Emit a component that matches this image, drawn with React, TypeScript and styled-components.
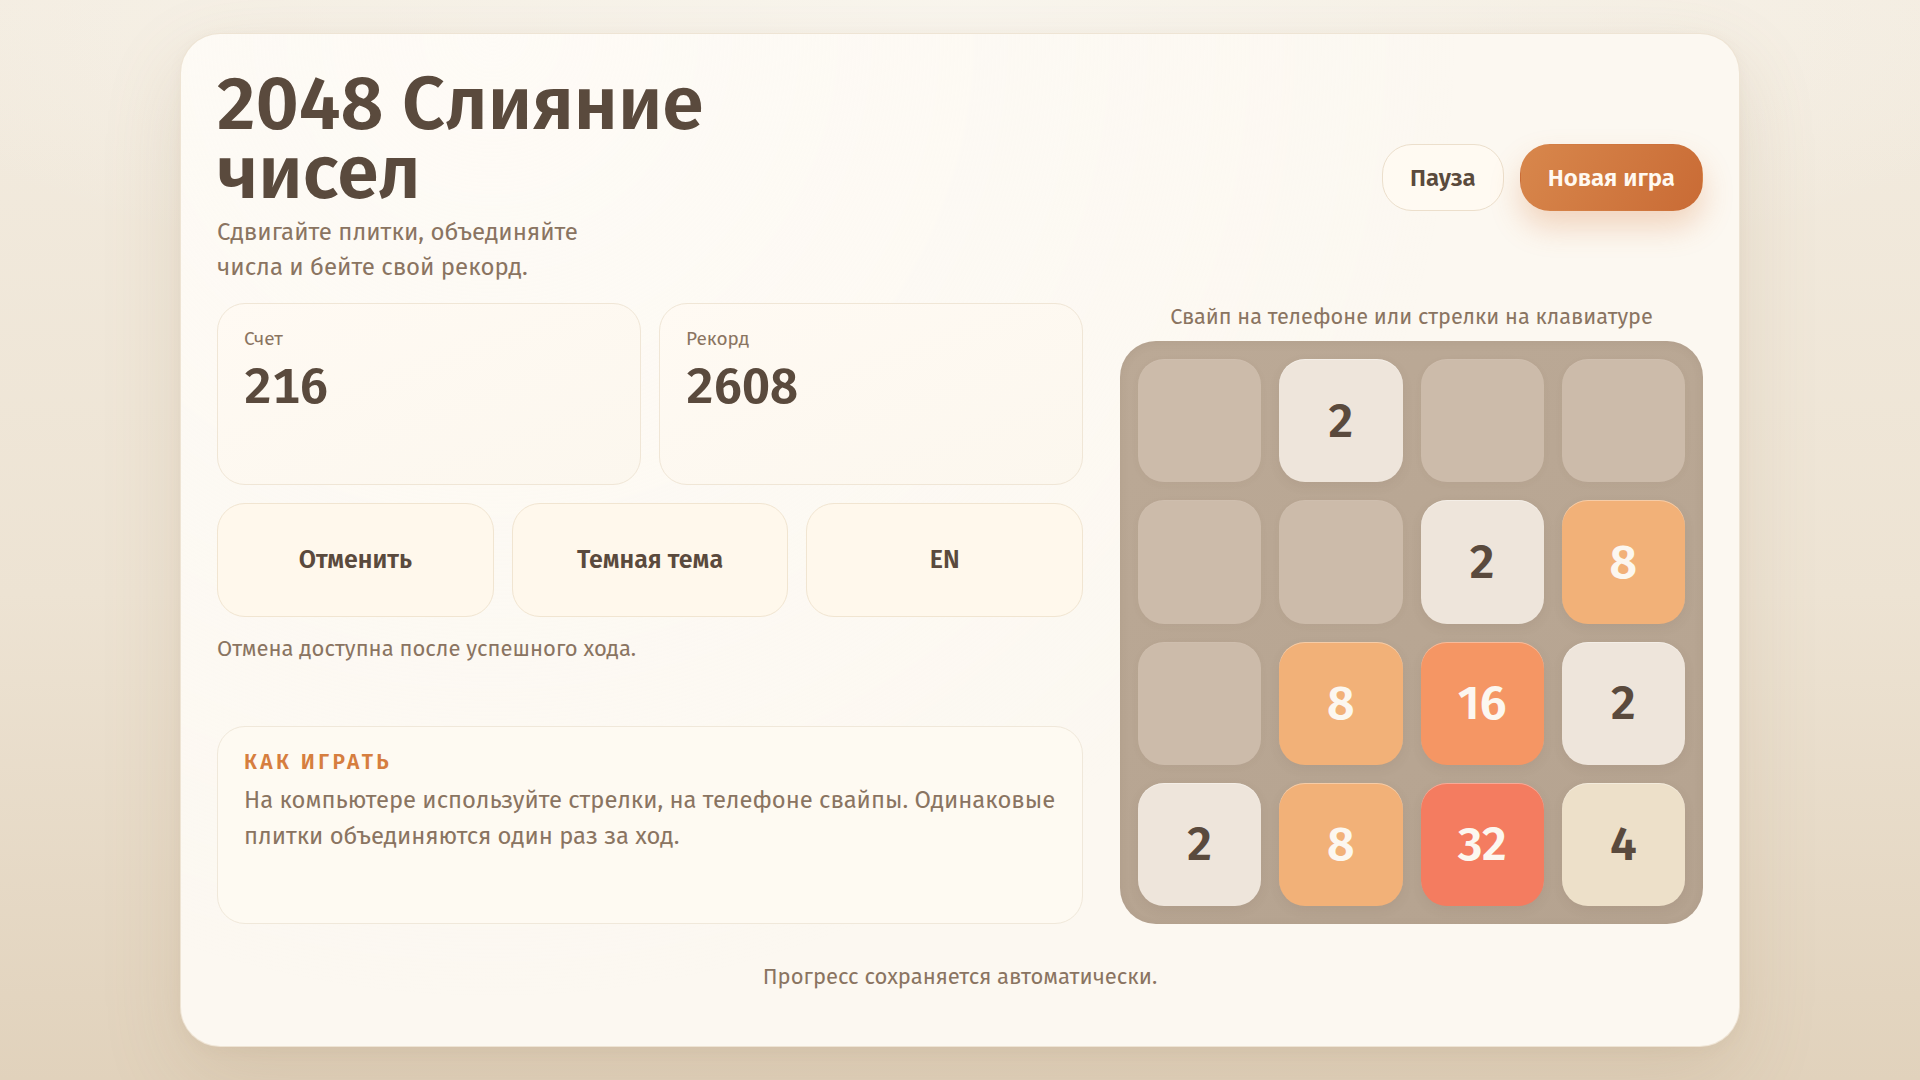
import React from "react";
import styled, { createGlobalStyle } from "styled-components";

const GlobalStyle = createGlobalStyle`
  *, *::before, *::after { box-sizing: border-box; }
  html, body { margin: 0; padding: 0; }
  body {
    min-height: 100vh;
    font-family: "Fira Sans", "DejaVu Sans", sans-serif;
    color: #5a4a3d;
    background:
      radial-gradient(ellipse 60% 30% at 50% 0%, rgba(250, 247, 240, 0.9), rgba(250, 247, 240, 0) 100%),
      linear-gradient(180deg, #f3ece0 0%, #ede3d3 55%, #e1d2bc 100%);
  }
`;

const Page = styled.div`
  min-height: 100vh;
  padding: 33px 180px;
`;

const Card = styled.main`
  min-height: calc(100vh - 66px);
  display: flex;
  flex-direction: column;
  padding: 36px 36px 18px;
  border-radius: 40px;
  border: 1px solid rgba(236, 225, 208, 0.9);
  background:
    radial-gradient(circle at 20% 0%, #fefbf6 0%, rgba(254, 251, 246, 0) 60%),
    #fcf8f1;
  box-shadow: 0 30px 80px rgba(150, 120, 80, 0.16), 0 4px 14px rgba(150, 120, 80, 0.06);
`;

const Header = styled.header`
  display: flex;
  align-items: center;
  justify-content: space-between;
`;

const TitleBlock = styled.div`
  display: flex;
  flex-direction: column;
  gap: 7px;
`;

const Title = styled.h1`
  margin: 0;
  max-width: 600px;
  font-size: 75px;
  line-height: 69px;
  font-weight: 600;
  color: #5a4a3d;
`;

const Subtitle = styled.p`
  margin: 0;
  max-width: 400px;
  font-size: 24px;
  line-height: 35px;
  color: #8a7461;
`;

const HeaderActions = styled.div`
  display: flex;
  gap: 16px;
`;

const PillButton = styled.button<{ $primary?: boolean }>`
  height: 67px;
  padding: 0 27px;
  border-radius: 30px;
  font-family: inherit;
  font-size: 24px;
  font-weight: 600;
  cursor: pointer;
  border: 1px solid ${(p) => (p.$primary ? "transparent" : "#ecdfcc")};
  color: ${(p) => (p.$primary ? "#fff9f1" : "#5a4a3d")};
  background: ${(p) =>
    p.$primary ? "linear-gradient(120deg, #d8874c 0%, #c96b35 100%)" : "#fffaf2"};
  box-shadow: ${(p) =>
    p.$primary ? "0 16px 30px rgba(214, 122, 62, 0.28)" : "none"};
`;

const Main = styled.section`
  margin-top: 18px;
  display: grid;
  grid-template-columns: minmax(0, 1fr) 583px;
  gap: 37px;
`;

const LeftColumn = styled.div`
  display: flex;
  flex-direction: column;
`;

const StatsRow = styled.div`
  display: grid;
  grid-template-columns: 1fr 1fr;
  gap: 18px;
`;

const StatCard = styled.div`
  height: 182px;
  padding: 23px 26px;
  border-radius: 28px;
  border: 1px solid #f0e6d6;
  background: linear-gradient(160deg, #fffaf3 0%, #fcf7ee 100%);
  display: flex;
  flex-direction: column;
`;

const StatLabel = styled.span`
  font-size: 19px;
  line-height: 24px;
  color: #8a7461;
`;

const StatValue = styled.span`
  margin-top: 7px;
  font-size: 50px;
  line-height: 56px;
  font-weight: 600;
  font-variant-numeric: tabular-nums;
  color: #5a4a3d;
`;

const ActionRow = styled.div`
  margin-top: 18px;
  display: grid;
  grid-template-columns: repeat(3, 1fr);
  gap: 18px;
`;

const ActionButton = styled.button`
  height: 114px;
  border-radius: 28px;
  border: 1px solid #f1e5d1;
  background: #fff8ec;
  font-family: inherit;
  font-size: 25px;
  font-weight: 600;
  color: #5a4a3d;
  cursor: pointer;
`;

const Note = styled.p`
  margin: 17px 0 0;
  font-size: 22px;
  line-height: 30px;
  color: #8a7461;
`;

const HowTo = styled.div`
  margin-top: auto;
  height: 198px;
  padding: 22px 12px 22px 26px;
  border-radius: 28px;
  border: 1px solid #f0e8da;
  background: #fefaf2;
`;

const HowToTitle = styled.h2`
  margin: 0;
  font-size: 21px;
  line-height: 26px;
  font-weight: 600;
  letter-spacing: 3.4px;
  color: #d67e3f;
`;

const HowToText = styled.p`
  margin: 7px 0 0;
  font-size: 23.8px;
  line-height: 36px;
  color: #8a7461;
`;

const RightColumn = styled.div`
  display: flex;
  flex-direction: column;
  align-items: center;
  gap: 10px;
`;

const Hint = styled.p`
  margin: 0;
  font-size: 21.7px;
  line-height: 28px;
  color: #8a7461;
`;

const Board = styled.div`
  width: 583px;
  height: 583px;
  padding: 18px;
  border-radius: 36px;
  background: linear-gradient(160deg, #bba996 0%, #b5a390 100%);
  box-shadow: inset 0 2px 10px rgba(90, 70, 50, 0.08);
  display: grid;
  grid-template-columns: repeat(4, 1fr);
  grid-template-rows: repeat(4, 1fr);
  gap: 18px;
`;

const tileColors: Record<number, { bg: string; fg: string }> = {
  0: { bg: "#ccbbaa", fg: "#5a4a3d" },
  2: { bg: "#eee5db", fg: "#5a4a3d" },
  4: { bg: "#ede0c9", fg: "#5a4a3d" },
  8: { bg: "#f2b178", fg: "#fcf7f0" },
  16: { bg: "#f59664", fg: "#fcf7f0" },
  32: { bg: "#f47c60", fg: "#fcf7f0" },
};

const Tile = styled.div<{ $v: number }>`
  border-radius: 26px;
  display: flex;
  align-items: center;
  justify-content: center;
  font-size: 48px;
  font-weight: 600;
  background: ${(p) => tileColors[p.$v].bg};
  color: ${(p) => tileColors[p.$v].fg};
  box-shadow: ${(p) =>
    p.$v === 0
      ? "inset 0 1px 0 rgba(255,255,255,0.05), 0 2px 8px rgba(90,70,50,0.04)"
      : "inset 0 1px 0 rgba(255,255,255,0.35), 0 4px 12px rgba(90,70,50,0.08)"};
`;

const Footer = styled.p`
  margin: 0;
  padding: 38px 0 0;
  text-align: center;
  font-size: 22px;
  line-height: 30px;
  color: #8a7461;
`;

const grid = [
  [0, 2, 0, 0],
  [0, 0, 2, 8],
  [0, 8, 16, 2],
  [2, 8, 32, 4],
];

export default function App() {
  return (
    <>
      <GlobalStyle />
      <Page>
        <Card>
          <Header>
            <TitleBlock>
              <Title>2048 Слияние чисел</Title>
              <Subtitle>Сдвигайте плитки, объединяйте числа и бейте свой рекорд.</Subtitle>
            </TitleBlock>
            <HeaderActions>
              <PillButton>Пауза</PillButton>
              <PillButton $primary>Новая игра</PillButton>
            </HeaderActions>
          </Header>
          <Main>
            <LeftColumn>
              <StatsRow>
                <StatCard>
                  <StatLabel>Счет</StatLabel>
                  <StatValue>216</StatValue>
                </StatCard>
                <StatCard>
                  <StatLabel>Рекорд</StatLabel>
                  <StatValue>2608</StatValue>
                </StatCard>
              </StatsRow>
              <ActionRow>
                <ActionButton>Отменить</ActionButton>
                <ActionButton>Темная тема</ActionButton>
                <ActionButton>EN</ActionButton>
              </ActionRow>
              <Note>Отмена доступна после успешного хода.</Note>
              <HowTo>
                <HowToTitle>КАК ИГРАТЬ</HowToTitle>
                <HowToText>
                  На компьютере используйте стрелки, на телефоне свайпы. Одинаковые плитки
                  объединяются один раз за ход.
                </HowToText>
              </HowTo>
            </LeftColumn>
            <RightColumn>
              <Hint>Свайп на телефоне или стрелки на клавиатуре</Hint>
              <Board>
                {grid.flat().map((v, i) => (
                  <Tile key={i} $v={v}>
                    {v ? v : ""}
                  </Tile>
                ))}
              </Board>
            </RightColumn>
          </Main>
          <Footer>Прогресс сохраняется автоматически.</Footer>
        </Card>
      </Page>
    </>
  );
}
